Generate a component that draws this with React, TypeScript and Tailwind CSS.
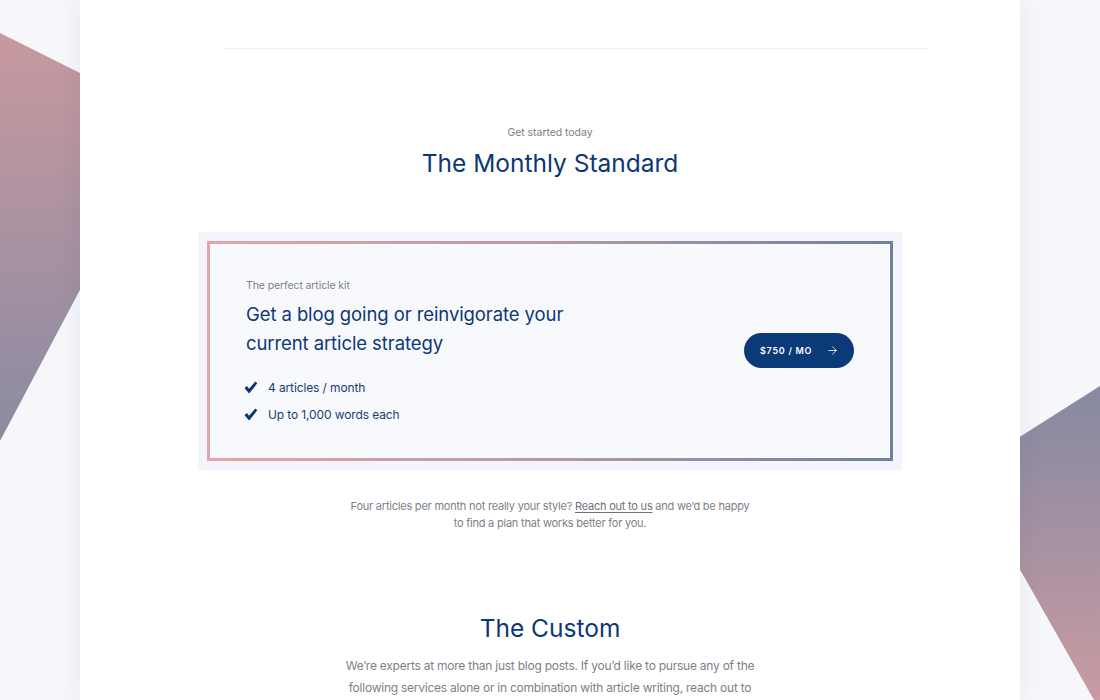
import { ArrowRight } from 'lucide-react'

function Check() {
  return (
    <svg width="14" height="13" viewBox="0 0 14 13" className="-ml-[2px] shrink-0">
      <path d="M0.5 7.2 L2.9 5.1 L5.1 7.7 L11.3 0.6 L13.3 2.3 L5.2 12.4 Z" fill="#0c3672" />
    </svg>
  )
}

export default function App() {
  return (
    <div
      className="relative w-full min-h-[700px] h-[700px] overflow-hidden bg-[#f6f7fb] text-[#0d3775]"
      style={{ fontFamily: 'Inter, "Noto Sans", sans-serif' }}
    >
      {/* background shapes */}
      <svg className="absolute inset-0" width="1100" height="700" viewBox="0 0 1100 700">
        <defs>
          <linearGradient id="gl" x1="0" y1="0" x2="0" y2="1">
            <stop offset="0" stopColor="#c8999f" />
            <stop offset="1" stopColor="#8a8ba2" />
          </linearGradient>
          <linearGradient id="gr" x1="0" y1="0" x2="0" y2="1">
            <stop offset="0" stopColor="#8589a2" />
            <stop offset="1" stopColor="#c99ba2" />
          </linearGradient>
        </defs>
        <polygon points="0,33 82,74 82,286 0,441" fill="url(#gl)" />
        <polygon points="1018,438 1100,386 1100,700 1094,700 1018,566" fill="url(#gr)" />
      </svg>

      <div className="relative mx-[80px] h-full bg-white shadow-[0_0_24px_rgba(30,40,80,0.07)]">
        <div className="pt-[48px] ml-[144px] mr-[92px] border-b border-[#eef0f3]" />

        <div className="flex flex-col items-center pt-[76px]">
          <p className="text-[10.5px] tracking-[-0.005em] text-[#7c7f88]">Get started today</p>
          <h2 className="mt-[5px] text-[24.5px] leading-[34px] text-[#0d3775]">The Monthly Standard</h2>
        </div>

        <div className="mx-[118px] mt-[52px] bg-[#f4f5fa] p-[9px]">
          <div className="bg-linear-to-r from-[#e3a5aa] via-[#b49aa6] to-[#6f7f9f] p-[3px]">
            <div className="flex items-center justify-between bg-[#f8f9fd] pl-[36px] pr-[36px] pt-[34px] pb-[34px]">
              <div>
                <p className="text-[10.5px] tracking-[-0.01em] text-[#7e8189]">The perfect article kit</p>
                <h3 className="mt-[6px] w-[330px] text-[18.5px] tracking-[-0.005em] leading-[29px] text-[#0d3775]">
                  Get a blog going or reinvigorate your current article strategy
                </h3>
                <ul className="mt-[20px] flex flex-col gap-[8px]">
                  <li className="flex items-center gap-[10px] text-[12px] tracking-[-0.01em] leading-[19px] text-[#1a3d70]">
                    <Check />
                    4 articles / month
                  </li>
                  <li className="flex items-center gap-[10px] text-[12px] tracking-[-0.01em] leading-[19px] text-[#1a3d70]">
                    <Check />
                    Up to 1,000 words each
                  </li>
                </ul>
              </div>
              <button className="flex h-[35px] w-[110px] items-center justify-between rounded-full bg-[#0b3a78] pl-[16px] pr-[15px] text-[9px] font-semibold tracking-[0.08em] text-white">
                $750 / MO
                <ArrowRight size={13} strokeWidth={1.5} />
              </button>
            </div>
          </div>
        </div>

        <p className="mx-auto mt-[28px] w-[410px] text-center text-[11px] tracking-[-0.02em] leading-[17px] text-[#7c7f88]">
          Four articles per month not really your style?{' '}
          <a className="underline underline-offset-2 text-[#6e7179]">Reach out to us</a> and we’d be happy to find a
          plan that works better for you.
        </p>

        <h2 className="mt-[79px] text-center text-[24.5px] leading-[34px] text-[#0d3775]">The Custom</h2>
        <p className="mx-auto mt-[10px] w-[412px] text-center text-[12px] tracking-[-0.02em] leading-[22px] text-[#7c7f88]">
          We’re experts at more than just blog posts. If you’d like to pursue any of the following services alone or in
          combination with article writing, reach out to us and we’ll put together a custom plan.
        </p>
      </div>
    </div>
  )
}
